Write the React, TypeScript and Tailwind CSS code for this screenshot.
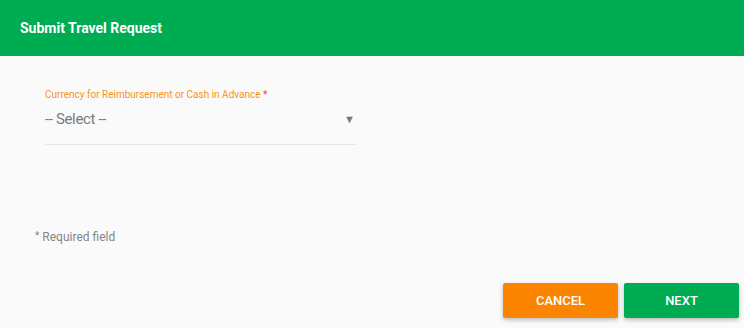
import React from 'react';

const font = { fontFamily: 'Roboto, "Liberation Sans", sans-serif' };

export default function App() {
    return (
        <div className="w-[744px] h-[328px] bg-[#fafafa] flex flex-col" style={font}>
            <div className="h-14 bg-[#00ac52] flex items-center px-5">
                <h1 className="text-[14px] font-bold text-white leading-none pb-px">Submit Travel Request</h1>
            </div>
            <div className="flex-1 flex flex-col">
                <div className="pl-[45px] pt-[33px] w-[356px]">
                    <label className="block text-[10px] leading-3 text-[#f7931e]">
                        Currency for Reimbursement or Cash in Advance <span className="text-[#f44336]">*</span>
                    </label>
                    <div className="flex items-center justify-between h-[44px] border-b border-[#e5e5e5]">
                        <span className="text-[15px] tracking-[-0.35px] text-[#7a7a7a] pb-[6px]">-- Select --</span>
                        <span className="text-[11px] text-[#777] pb-[5px] pr-px">▼</span>
                    </div>
                </div>
                <div className="pl-[35px] pt-[86px] text-[12px] text-[#858585] leading-none">
                    <span className="text-[10px] align-top mr-[3px]">*</span>Required field
                </div>
                <div className="flex-1" />
                <div className="flex justify-end gap-[6px] pr-[5px] pb-[10px]">
                    <button className="w-[115px] h-[35px] bg-[#fb8500] text-white text-[13px] font-medium rounded-[2px] shadow-[0_2px_4px_rgba(0,0,0,0.25)]">CANCEL</button>
                    <button className="w-[115px] h-[35px] bg-[#00ac52] text-white text-[13px] font-medium rounded-[2px] shadow-[0_2px_4px_rgba(0,0,0,0.25)]">NEXT</button>
                </div>
            </div>
        </div>
    );
}
